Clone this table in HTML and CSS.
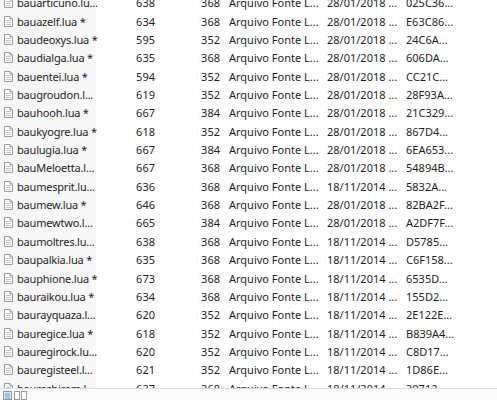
FILE: index.html
```html
<!DOCTYPE html>
<html lang="pt">
<head>
    <meta charset="UTF-8">
    <title>Arquivos</title>
    <link rel="stylesheet" href="styles.css">
</head>
<body>
    <div class="window">
        <div class="file-list">
            <div class="rows" id="rows"></div>
        </div>
        <div class="status-bar">
            <span class="view-btn active">
                <svg width="9" height="9" viewBox="0 0 9 9"><rect x="0.5" y="0.5" width="8" height="8" fill="#dfe9f5" stroke="#7d98b8"/><path d="M2 3h5M2 5h5M2 7h5" stroke="#7d98b8"/></svg>
            </span>
            <span class="view-btn">
                <svg width="14" height="9" viewBox="0 0 14 9"><rect x="0.5" y="0.5" width="5" height="8" fill="#fff" stroke="#9a9a9a"/><rect x="7.5" y="0.5" width="5" height="8" fill="#fff" stroke="#9a9a9a"/></svg>
            </span>
        </div>
    </div>

    <script>
    const files = [
        ['bauarticuno.lu...', 638, 368, '28/01/2018 ...', '025C36...'],
        ['bauazelf.lua *', 634, 368, '28/01/2018 ...', 'E63C86...'],
        ['baudeoxys.lua *', 595, 352, '28/01/2018 ...', '24C6A...'],
        ['baudialga.lua *', 635, 368, '28/01/2018 ...', '606DA...'],
        ['bauentei.lua *', 594, 352, '28/01/2018 ...', 'CC21C...'],
        ['baugroudon.l...', 619, 352, '28/01/2018 ...', '28F93A...'],
        ['bauhooh.lua *', 667, 384, '28/01/2018 ...', '21C329...'],
        ['baukyogre.lua *', 618, 352, '28/01/2018 ...', '867D4...'],
        ['baulugia.lua *', 667, 384, '28/01/2018 ...', '6EA653...'],
        ['bauMeloetta.l...', 667, 368, '28/01/2018 ...', '54894B...'],
        ['baumesprit.lu...', 636, 368, '18/11/2014 ...', '5832A...'],
        ['baumew.lua *', 646, 368, '28/01/2018 ...', '82BA2F...'],
        ['baumewtwo.l...', 665, 384, '28/01/2018 ...', 'A2DF7F...'],
        ['baumoltres.lu...', 638, 368, '18/11/2014 ...', 'D5785...'],
        ['baupalkia.lua *', 635, 368, '18/11/2014 ...', 'C6F158...'],
        ['bauphione.lua *', 673, 368, '18/11/2014 ...', '6535D...'],
        ['bauraikou.lua *', 634, 368, '18/11/2014 ...', '155D2...'],
        ['baurayquaza.l...', 620, 352, '18/11/2014 ...', '2E122E...'],
        ['bauregice.lua *', 618, 352, '18/11/2014 ...', 'B839A4...'],
        ['bauregirock.lu...', 620, 352, '18/11/2014 ...', 'C8D17...'],
        ['bauregisteel.l...', 621, 352, '18/11/2014 ...', '1D86E...'],
        ['baureshiram.l...', 637, 368, '18/11/2014 ...', '30712...']
    ];

    const icon = '<svg class="file-icon" width="9" height="11" viewBox="0 0 9 11">' +
        '<path d="M0.5 0.5h5.5l2.5 2.5v7.5h-8z" fill="#fff" stroke="#9b9b9b"/>' +
        '<path d="M6 0.5v2.5h2.5" fill="none" stroke="#9b9b9b"/>' +
        '<path d="M2 4.5h5M2 6.5h5M2 8.5h5" stroke="#c4c4c4"/></svg>';

    const rows = document.getElementById('rows');
    files.forEach(f => {
        const row = document.createElement('div');
        row.className = 'row';
        row.innerHTML =
            `<div class="cell name">${icon}<span>${f[0]}</span></div>` +
            `<div class="cell num">${f[1]}</div>` +
            `<div class="cell num">${f[2]}</div>` +
            `<div class="cell type">Arquivo Fonte L...</div>` +
            `<div class="cell date">${f[3]}</div>` +
            `<div class="cell crc">${f[4]}</div>`;
        rows.appendChild(row);
    });
    </script>
</body>
</html>
```

FILE: styles.css
```css
body {
    margin: 0;
    background-color: #fff;
    font-family: 'Noto Sans', 'Open Sans', sans-serif;
    font-size: 11px;
    color: #1e1e1e;
}
.window {
    width: 497px;
    height: 400px;
    display: flex;
    flex-direction: column;
    overflow: hidden;
}
.file-list {
    height: 390px;
    overflow: hidden;
    background: linear-gradient(to right, #f7f7f7 0, #f7f7f7 96px, #fff 96px);
}
.rows {
    margin-top: -6.5px;
}
.row {
    display: grid;
    grid-template-columns: 97px 58px 65px 107px 79px 1fr;
    height: 18.36px;
    align-items: center;
    white-space: nowrap;
}
.name {
    display: flex;
    align-items: center;
    padding-left: 4px;
    letter-spacing: -0.2px;
}
.file-icon {
    flex: none;
    margin-right: 4px;
}
.num {
    text-align: right;
}
.type {
    padding-left: 9px;
}
.status-bar {
    flex: 1;
    border-top: 1px solid #dcdcdc;
    background-color: #fbfbfb;
    display: flex;
    align-items: flex-start;
    gap: 2px;
    padding: 2px 0 0 3px;
}
.view-btn {
    display: flex;
}
```
